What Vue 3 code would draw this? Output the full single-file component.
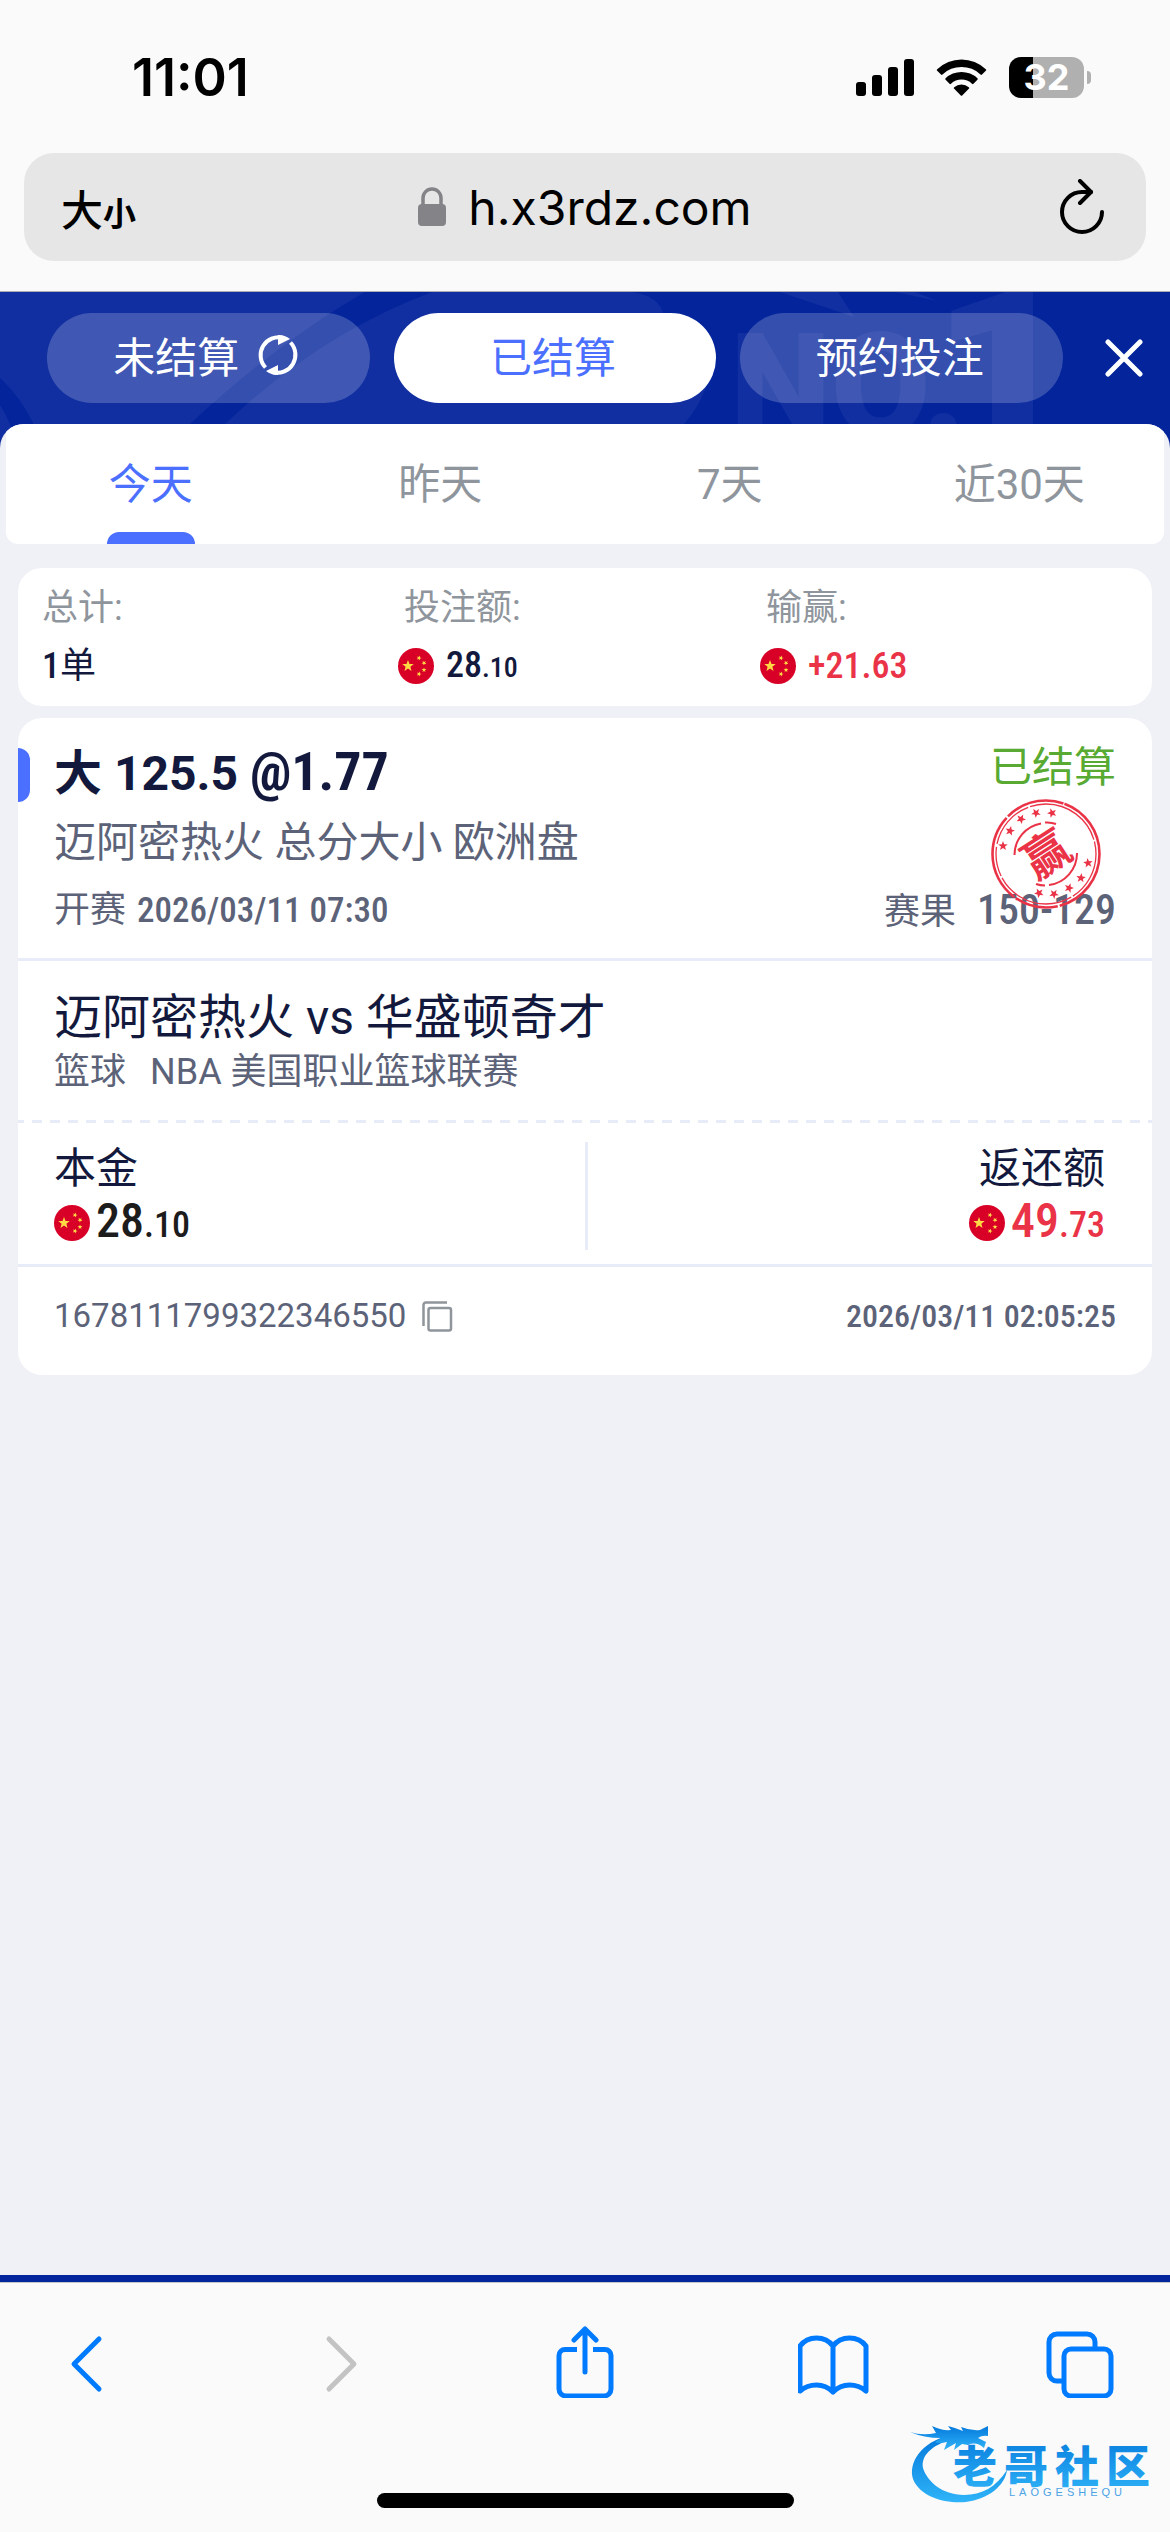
<script setup>
import { ref } from 'vue'

const modes = [
  { id: 'open', label: '未结算', refresh: true },
  { id: 'settled', label: '已结算' },
  { id: 'reserved', label: '预约投注' },
]
const ranges = ['今天', '昨天', '7天', '近30天']
const mode = ref('settled')
const range = ref('今天')

const star = (cx, cy, r, turn = 0) => {
  const pts = []
  for (let i = 0; i < 10; i++) {
    const rad = i % 2 ? r * 0.42 : r
    const a = ((i * 36 - 90 + turn) * Math.PI) / 180
    pts.push(`${(cx + rad * Math.cos(a)).toFixed(1)},${(cy + rad * Math.sin(a)).toFixed(1)}`)
  }
  return pts.join(' ')
}
const flagStars = [
  star(10, 18, 6),
  star(21, 10, 2.6, 20),
  star(26, 15, 2.6, 40),
  star(26, 22, 2.6),
  star(21, 26, 2.6, 20),
]
const sealStars = [
  [12, 47], [19, 32], [30, 20], [45, 14], [61, 14],
  [97, 64], [90, 79], [78, 89], [63, 95], [48, 94],
].map(([x, y], i) => star(x, y, 5, i * 13))
</script>

<template>
  <div class="page">
    <div class="status">
      <span class="clock">11:01</span>
      <div class="signals">
        <svg width="58" height="37" viewBox="0 0 58 37" aria-hidden="true">
          <rect x="0" y="23" width="10" height="14" rx="3" />
          <rect x="16" y="16" width="10" height="21" rx="3" />
          <rect x="32" y="8" width="10" height="29" rx="3" />
          <rect x="48" y="0" width="10" height="37" rx="3" />
        </svg>
        <svg width="51" height="37" viewBox="0 0 51 37" aria-hidden="true">
          <path d="M1.2 10.2a35 35 0 0 1 48.6 0 1 1 0 0 1 0 1.5l-3.8 3.8a1 1 0 0 1-1.5 0 27.5 27.5 0 0 0-38 0 1 1 0 0 1-1.5 0l-3.8-3.8a1 1 0 0 1 0-1.5z" />
          <path d="M9.6 19.3a23 23 0 0 1 31.8 0 1 1 0 0 1 0 1.5l-3.9 3.9a1 1 0 0 1-1.5 0 15.5 15.5 0 0 0-21 0 1 1 0 0 1-1.5 0l-3.9-3.9a1 1 0 0 1 0-1.5z" />
          <path d="M18.2 28.2a11 11 0 0 1 14.6 0 1 1 0 0 1 0 1.5l-6.6 6.8a1 1 0 0 1-1.4 0l-6.6-6.8a1 1 0 0 1 0-1.5z" />
        </svg>
        <div class="battery"><span>32</span></div>
      </div>
    </div>

    <div class="address">
      <button class="size" type="button"><span class="big">大</span><span class="small">小</span></button>
      <button class="url" type="button">
        <svg width="28" height="40" viewBox="0 0 28 40" aria-hidden="true">
          <rect x="0" y="17" width="28" height="22" rx="4" fill="#838388" />
          <path d="M5 18V11a9 9 0 0 1 18 0v7" fill="none" stroke="#838388" stroke-width="3.5" />
        </svg>
        <span>h.x3rdz.com</span>
      </button>
      <button class="reload" type="button" aria-label="刷新">
        <svg width="50" height="56" viewBox="0 0 50 56" fill="none" stroke="#000" stroke-width="4" stroke-linecap="round" stroke-linejoin="round">
          <path d="M43 33A20 20 0 1 1 23 13h9" />
          <path d="M21 2l11 11-11 11" />
        </svg>
      </button>
    </div>

    <main class="app">
      <header class="head">
        <svg class="pattern" width="1170" height="153" viewBox="0 0 1170 153" aria-hidden="true">
          <rect width="1170" height="153" fill="#03249b" />
          <g fill="#112fa1">
            <path d="M0 0H365Q275 52 190 132L165 153H42Q28 112 0 86Z" />
            <path d="M0 113Q10 128 17 153H0Z" />
            <path d="M432 0H632Q660 4 664 24L712 60Q712 100 684 132L660 153H205L225 132Q320 42 432 0Z" />
            <path d="M780 0H838L854 25Z" />
            <path d="M895 0H915L937 9Z" />
            <text class="ghost" x="730" y="144" font-size="144">NO.</text>
            <text class="ghost" x="931" y="170" font-size="250">1</text>
          </g>
        </svg>
        <nav class="modes">
          <button
            v-for="m in modes"
            :key="m.id"
            type="button"
            class="pill"
            :class="{ on: mode === m.id }"
            @click="mode = m.id"
          >
            {{ m.label }}
            <svg v-if="m.refresh" width="42" height="42" viewBox="0 0 42 42" aria-hidden="true">
              <g fill="none" stroke="#fff" stroke-width="4">
                <path d="M8.5 33.5A18 18 0 0 1 26 3.7" />
                <path d="M33.5 8.5A18 18 0 0 1 16 38.3" />
              </g>
              <path d="M21 1Q28 1 33 5L21 11ZM21 41Q14 41 9 37L21 31Z" fill="#fff" />
            </svg>
          </button>
        </nav>
        <button class="close" type="button" aria-label="关闭">
          <svg width="38" height="38" viewBox="0 0 38 38" stroke="#fff" stroke-width="5" stroke-linecap="round">
            <path d="M3 3l32 32M35 3L3 35" />
          </svg>
        </button>
      </header>

      <div class="body">
        <nav class="ranges">
          <button
            v-for="r in ranges"
            :key="r"
            type="button"
            :class="{ on: range === r }"
            @click="range = r"
          >{{ r }}</button>
        </nav>

        <section class="summary">
          <div class="cell">
            <span class="name">总计:</span>
            <span class="value"><b>1</b>单</span>
          </div>
          <div class="cell">
            <span class="name">投注额:</span>
            <span class="value flagged">
              <svg class="flag" viewBox="0 0 36 36"><circle cx="18" cy="18" r="18" fill="#d80027" /><polygon v-for="s in flagStars" :key="s" :points="s" fill="#ffda44" /></svg>
              <span class="num">28<small>.10</small></span>
            </span>
          </div>
          <div class="cell">
            <span class="name">输赢:</span>
            <span class="value flagged">
              <svg class="flag" viewBox="0 0 36 36"><circle cx="18" cy="18" r="18" fill="#d80027" /><polygon v-for="s in flagStars" :key="s" :points="s" fill="#ffda44" /></svg>
              <span class="num red">+21.63</span>
            </span>
          </div>
        </section>

        <article class="bet">
          <div class="pick">
            <div class="row">
              <h1>大 125.5 <span class="odds">@1.77</span></h1>
              <span class="state">已结算</span>
            </div>
            <p class="market">迈阿密热火 总分大小 欧洲盘</p>
            <div class="row info">
              <span>开赛 <span class="date">2026/03/11 07:30</span></span>
              <span>赛果 <span class="score">150-129</span></span>
            </div>
            <svg class="seal" width="110" height="110" viewBox="0 0 110 110" aria-hidden="true">
              <g fill="none" stroke="#ea3347">
                <circle cx="55" cy="55" r="53.5" stroke-width="2.6" stroke-dasharray="70 2 44 1.5 90 2 60 1" />
                <circle cx="55" cy="55" r="50" stroke-width="1.3" stroke-dasharray="50 2 80 2 30 3" />
                <path d="M23.5 56A32 32 0 0 1 50 24.5M54 23.5Q60 23 65 25M86 54A32 32 0 0 1 58 86M54 86.5Q49 86.5 45 85" stroke-width="2" />
              </g>
              <polygon v-for="s in sealStars" :key="s" :points="s" fill="#ea3347" />
              <text x="55" y="72" text-anchor="middle" transform="rotate(-33 55 55)">赢</text>
            </svg>
          </div>

          <div class="match">
            <h2>迈阿密热火 vs 华盛顿奇才</h2>
            <p><span>篮球</span><span>NBA 美国职业篮球联赛</span></p>
          </div>
          <div class="dashes"></div>

          <div class="money">
            <div class="stake">
              <span class="caption">本金</span>
              <span class="amount">
                <svg class="flag" viewBox="0 0 36 36"><circle cx="18" cy="18" r="18" fill="#d80027" /><polygon v-for="s in flagStars" :key="s" :points="s" fill="#ffda44" /></svg>
                <span class="num">28<small>.10</small></span>
              </span>
            </div>
            <div class="payout">
              <span class="caption">返还额</span>
              <span class="amount red">
                <svg class="flag" viewBox="0 0 36 36"><circle cx="18" cy="18" r="18" fill="#d80027" /><polygon v-for="s in flagStars" :key="s" :points="s" fill="#ffda44" /></svg>
                <span class="num">49<small>.73</small></span>
              </span>
            </div>
          </div>

          <div class="row order">
            <span class="serial">
              1678111799322346550
              <button type="button" aria-label="复制">
                <svg width="31" height="31" viewBox="0 0 31 31" fill="none" stroke="#8f959b" stroke-width="2.5">
                  <rect x="6.5" y="7" width="22.5" height="22.5" rx="2" />
                  <path d="M25 1.5H4A2.5 2.5 0 0 0 1.5 4V25" />
                </svg>
              </button>
            </span>
            <span class="date">2026/03/11 02:05:25</span>
          </div>
        </article>
      </div>
    </main>

    <footer class="toolbar">
      <div class="tools">
        <button type="button" aria-label="后退">
          <svg width="72" height="72" viewBox="0 0 72 72"><path d="M47 13L22 38l25 25" /></svg>
        </button>
        <button type="button" aria-label="前进" disabled>
          <svg width="72" height="72" viewBox="0 0 72 72"><path d="M28 13l25 25-25 25" /></svg>
        </button>
        <button type="button" aria-label="分享">
          <svg width="72" height="72" viewBox="0 0 72 72"><path d="M36 46V3M25 14L36 3l11 11" /><path d="M28 23.5H16A6 6 0 0 0 10 29.5V63A7 7 0 0 0 17 70H55A7 7 0 0 0 62 63V29.5A6 6 0 0 0 56 23.5H44" stroke-linecap="butt" /></svg>
        </button>
        <button type="button" aria-label="书签">
          <svg width="72" height="72" viewBox="0 0 72 72"><path d="M35 20Q29 12 18.5 12 8 12 2 20V65Q9 59 18.5 59 28 59 35 66 42 59 51.5 59 61 59 68 65V20Q62 12 51.5 12 41 12 35 20ZM35 20V66" /></svg>
        </button>
        <button type="button" aria-label="标签页">
          <svg width="72" height="72" viewBox="0 0 72 72"><rect x="18" y="23" width="47" height="47" rx="7" /><path d="M18 55H11A8 8 0 0 1 3 47V16A8 8 0 0 1 11 8H41A8 8 0 0 1 49 16V22" stroke-linecap="butt" /></svg>
        </button>
      </div>
      <div class="home"></div>
      <svg class="brand" width="250" height="94" viewBox="0 0 250 94">
        <defs>
          <linearGradient id="brand" x1="0" y1="0" x2="0" y2="1">
            <stop offset="0" stop-color="#0579dc" />
            <stop offset="1" stop-color="#2fb4f8" />
          </linearGradient>
        </defs>
        <g fill="url(#brand)">
          <path d="M40 18C14 24 0 44 5 61C12 79 38 86 58 84C80 81 97 68 99 52C88 69 74 77 56 77C34 77 19 63 15 50C13 38 22 28 46 20Z" />
          <path d="M2 14Q14 18 28 15L24 8Q34 13 43 12L40 8Q48 10 55 13L53 9Q63 13 72 12L80 8V18Q74 17 70 20L78 24 76 30Q68 23 60 27L54 26 46 32 48 25 36 32 39 24Q30 26 27 24L33 20Q16 20 2 14Z" />
        </g>
        <text class="brand-cn" x="45 96 147 198" y="65" fill="url(#brand)">老哥社区</text>
        <text class="brand-en" x="101" y="78">LAOGESHEQU</text>
      </svg>
    </footer>
  </div>
</template>

<style>
body {
  margin: 0;
}
</style>

<style scoped>
.page {
  display: flex;
  flex-direction: column;
  min-height: 100vh;
  background: #fafafa;
  color: #12193d;
  font-family: Roboto, "Noto Sans CJK SC", sans-serif;
}
button {
  margin: 0;
  padding: 0;
  border: 0;
  background: none;
  color: inherit;
  font: inherit;
}
svg {
  display: block;
  flex: none;
}
h1, h2, p {
  margin: 0;
}

.status {
  display: flex;
  align-items: center;
  justify-content: space-between;
  height: 41px;
  padding: 57px 79px 55px 132px;
  color: #000;
  font-family: Inter, sans-serif;
}
.clock {
  font-size: 52px;
  font-weight: 600;
}
.signals {
  display: flex;
  align-items: center;
  gap: 22px;
}
.battery {
  position: relative;
  width: 75px;
  height: 41px;
  margin-right: 7px;
  border-radius: 12px;
  background: linear-gradient(90deg, #000 24px, #b0b0b0 24px);
  color: #fff;
  font-size: 36px;
  font-weight: 700;
  line-height: 41px;
  text-align: center;
}
.battery::after {
  content: "";
  position: absolute;
  top: 14px;
  right: -7px;
  width: 4px;
  height: 13px;
  border-radius: 0 4px 4px 0;
  background: #b0b0b0;
}

.address {
  display: flex;
  align-items: center;
  justify-content: space-between;
  height: 108px;
  margin: 0 24px 30px;
  padding: 0 37px;
  border-radius: 30px;
  background: #e6e6e6;
  color: #000;
  font-family: Inter, "Noto Sans CJK SC", sans-serif;
}
.size {
  display: flex;
  flex: 1;
  align-items: baseline;
  font-weight: 500;
}
.big {
  font-size: 42px;
}
.small {
  font-size: 33px;
  font-weight: 700;
}
.url {
  display: flex;
  align-items: center;
  gap: 22px;
  font-size: 48px;
}
.reload {
  display: flex;
  flex: 1;
  justify-content: flex-end;
}

.app {
  display: flex;
  flex: 1;
  flex-direction: column;
  border-top: 1px solid #a9adb5;
  border-bottom: 7px solid #03249b;
  background: #03249b;
}
.head {
  position: relative;
  display: flex;
  align-items: center;
  gap: 42px;
  padding: 21px 27px 21px 47px;
}
.pattern {
  position: absolute;
  top: 0;
  left: 0;
}
.ghost {
  font-family: Roboto, sans-serif;
  font-weight: 900;
}
.modes {
  position: relative;
  display: flex;
  flex: 1;
  gap: 24px;
}
.pill {
  display: flex;
  flex: 1;
  align-items: center;
  justify-content: center;
  gap: 18px;
  box-sizing: border-box;
  height: 90px;
  padding: 0 4px 7px 0;
  border-radius: 45px;
  background: rgba(255, 255, 255, 0.2);
  color: #fff;
  font-size: 42px;
}
.pill.on {
  background: #fff;
  color: #4b70ff;
}
.close {
  position: relative;
}

.body {
  position: relative;
  flex: 1;
  overflow: hidden;
  border-radius: 24px 24px 0 0;
  background: #f0f1f6;
}
.ranges {
  display: flex;
  margin: 0 6px 24px;
  border-radius: 0 0 12px 12px;
  background: #fff;
}
.ranges button {
  position: relative;
  flex: 1;
  height: 120px;
  padding-bottom: 8px;
  color: #8f959c;
  font-size: 42px;
}
.ranges .on {
  color: #4b70ff;
}
.ranges .on::after {
  content: "";
  position: absolute;
  bottom: 0;
  left: 50%;
  width: 88px;
  height: 12px;
  margin-left: -44px;
  border-radius: 12px 12px 0 0;
  background: #4b70ff;
}

.summary {
  display: flex;
  margin: 0 18px 12px;
  padding: 16px 24px;
  border-radius: 24px;
  background: #fff;
}
.cell {
  display: flex;
  flex: 1;
  flex-direction: column;
  gap: 10px;
  font-size: 36px;
  line-height: 48px;
}
.name {
  color: #8f959c;
}
.value {
  height: 48px;
}
.value b {
  font-weight: 500;
}
.flagged {
  display: flex;
  align-items: center;
  gap: 12px;
  margin-left: -6px;
}
.flag {
  width: 36px;
  height: 36px;
}
.num, .date, .score, .odds, .value b {
  font-family: "Roboto Condensed", "Liberation Sans Narrow", Roboto, sans-serif;
}
.num {
  font-weight: 500;
}
.num small {
  font-size: 28px;
}
.red {
  color: #ea3347;
}

.bet {
  position: relative;
  margin: 0 18px;
  border-radius: 24px;
  background: #fff;
  color: #5c6379;
  font-size: 36px;
  line-height: 48px;
}
.bet::before {
  content: "";
  position: absolute;
  top: 30px;
  left: 0;
  width: 12px;
  height: 54px;
  border-radius: 0 12px 12px 0;
  background: #4b70ff;
}
.row {
  display: flex;
  justify-content: space-between;
}
.pick {
  position: relative;
  padding: 24px 36px;
  border-bottom: 3px solid #e8ebf8;
}
h1 {
  height: 60px;
  color: #12193d;
  font-size: 48px;
  font-weight: 700;
  line-height: 60px;
}
.odds {
  font-size: 54px;
}
.state {
  color: #58aa32;
  font-size: 42px;
  line-height: 52px;
}
.market {
  margin: 11px 0 13px;
  font-size: 42px;
  line-height: 60px;
}
.info {
  height: 48px;
}
.date {
  font-weight: 500;
}
.info .date {
  margin-left: 2px;
  font-size: 35px;
}
.score {
  margin-left: 12px;
  font-size: 42px;
  font-weight: 500;
}
.seal {
  position: absolute;
  top: 81px;
  right: 51px;
}
.seal text {
  fill: #ea3347;
  font-family: "Noto Sans CJK SC", sans-serif;
  font-size: 46px;
  font-weight: 700;
}
.match {
  padding: 27px 36px 24px;
}
h2 {
  color: #12193d;
  font-size: 48px;
  font-weight: 400;
  line-height: 60px;
}
.match p {
  display: flex;
  gap: 24px;
}
.dashes {
  height: 3px;
  background: repeating-linear-gradient(90deg, #e8ebf8 0 10px, transparent 10px 18px) -4px 0;
}
.money {
  display: grid;
  grid-template-columns: 1fr 1fr;
  padding: 19px 36px 14px;
  border-bottom: 3px solid #e8ebf8;
  line-height: 54px;
}
.stake, .payout {
  display: flex;
  flex-direction: column;
}
.payout {
  align-items: flex-end;
  padding-right: 11px;
  border-left: 3px solid #e8ebf8;
}
.caption {
  color: #12193d;
  font-size: 42px;
}
.amount {
  display: flex;
  align-items: center;
  gap: 6px;
  height: 54px;
  color: #1c1c1c;
  font-size: 48px;
}
.amount.red {
  color: #ea3347;
}
.amount small {
  font-size: 36px;
}
.order {
  padding: 25px 36px 35px;
  font-size: 33px;
}
.order .date {
  font-size: 32px;
}
.serial {
  display: flex;
  align-items: center;
  gap: 16px;
}

.toolbar {
  position: relative;
  display: flex;
  flex-direction: column;
  align-items: center;
  border-top: 1px solid #c6c6c8;
}
.tools {
  display: flex;
  justify-content: space-between;
  align-self: stretch;
  padding: 43px 52px 95px;
}
.tools svg {
  fill: none;
  stroke: #007aff;
  stroke-width: 5;
  stroke-linecap: round;
  stroke-linejoin: round;
}
.tools button:disabled svg {
  stroke: #c3c3c3;
}
.home {
  width: 417px;
  height: 15px;
  margin-bottom: 24px;
  border-radius: 8px;
  background: #000;
}
.brand {
  position: absolute;
  right: 12px;
  bottom: 20px;
}
.brand-cn {
  font-family: "Noto Sans CJK SC", sans-serif;
  font-size: 44px;
  font-weight: 900;
}
.brand-en {
  fill: #4ba3e6;
  font-family: "Liberation Sans", sans-serif;
  font-size: 11px;
  letter-spacing: 4px;
}
</style>
